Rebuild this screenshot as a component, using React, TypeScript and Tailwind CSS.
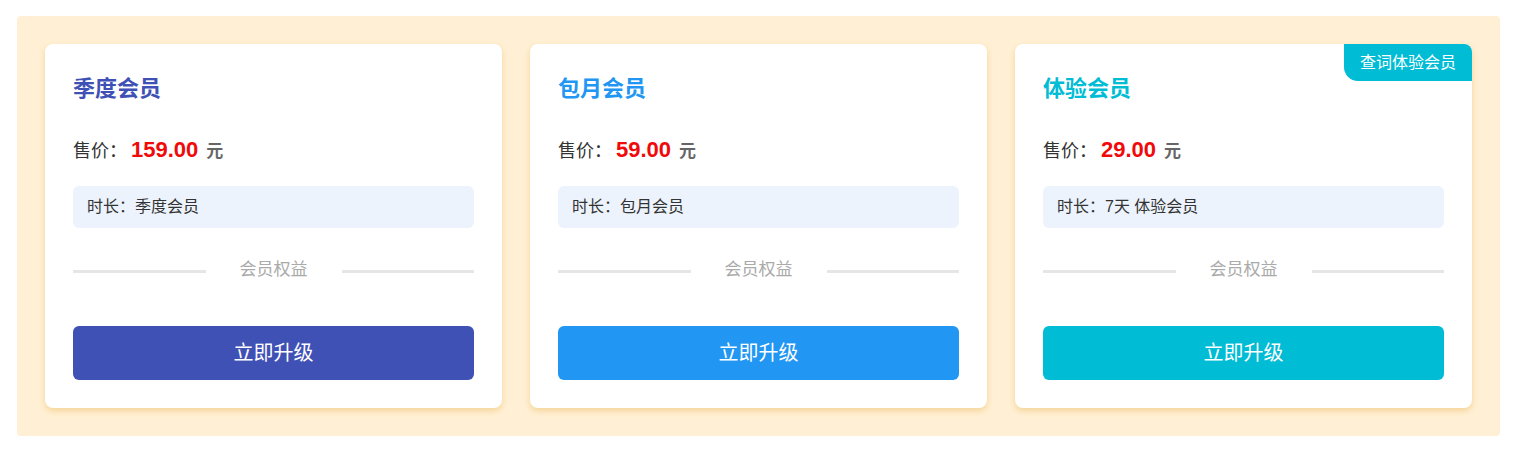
import React from 'react';

type Plan = {
  name: string;
  price: string;
  duration: string;
  titleClass: string;
  btnClass: string;
  badge?: string;
};

const plans: Plan[] = [
  { name: '季度会员', price: '159.00', duration: '季度会员', titleClass: 'text-[#3f51b5]', btnClass: 'bg-[#3f51b5]' },
  { name: '包月会员', price: '59.00', duration: '包月会员', titleClass: 'text-[#2196f3]', btnClass: 'bg-[#2196f3]' },
  { name: '体验会员', price: '29.00', duration: '7天 体验会员', titleClass: 'text-[#00bcd4]', btnClass: 'bg-[#00bcd4]', badge: '查词体验会员' },
];

function PlanCard({ plan }: { plan: Plan }) {
  return (
    <div className="relative flex flex-col bg-white rounded-[8px] px-[28px] pt-[28px] pb-[28px] shadow-[0_3px_6px_rgba(235,190,100,0.55)]">
      {plan.badge && (
        <div className="absolute top-0 right-0 h-[37px] px-[16px] flex items-center rounded-tr-[8px] rounded-bl-[14px] bg-[#00bcd4] text-white text-[16px]">
          {plan.badge}
        </div>
      )}
      {/* 标题 */}
      <h3 className={`text-[22px] leading-[34px] font-bold ${plan.titleClass}`}>{plan.name}</h3>

      {/* 价格 */}
      <div className="mt-[29px] flex items-baseline h-[30px] leading-[30px]">
        <span className="text-[18px] text-[#333]">售价：</span>
        <span className="text-[22px] font-bold text-[#f00a0a] ml-[4px]">{plan.price}</span>
        <span className="text-[17px] font-bold text-[#666] ml-[8px]">元</span>
      </div>

      {/* 时长 */}
      <div className="mt-[21px] h-[42px] flex items-center px-[14px] rounded-[6px] bg-[#ecf3fc] text-[16px] text-[#333]">
        时长：{plan.duration}
      </div>

      {/* 分隔 */}
      <div className="mt-[30px] h-[24px] flex items-center">
        <div className="flex-1 h-[3px] bg-[#e6e6e6] mt-[3px]" />
        <span className="px-[34px] text-[17px] text-[#aaa]">会员权益</span>
        <div className="flex-1 h-[3px] bg-[#e6e6e6] mt-[3px]" />
      </div>

      <button className={`mt-[44px] h-[54px] w-full rounded-[6px] text-white text-[20px] ${plan.btnClass}`}>
        立即升级
      </button>
    </div>
  );
}

export default function App() {
  return (
    <div className="min-h-screen bg-white pt-[16px] px-[17px] font-['Liberation_Sans','Noto_Sans_CJK_SC',sans-serif]">
      <div className="w-[1483px] bg-[#fff0d5] rounded-[4px] p-[28px] grid grid-cols-3 gap-[28px]">
        {plans.map((p) => (
          <PlanCard key={p.name} plan={p} />
        ))}
      </div>
    </div>
  );
}
